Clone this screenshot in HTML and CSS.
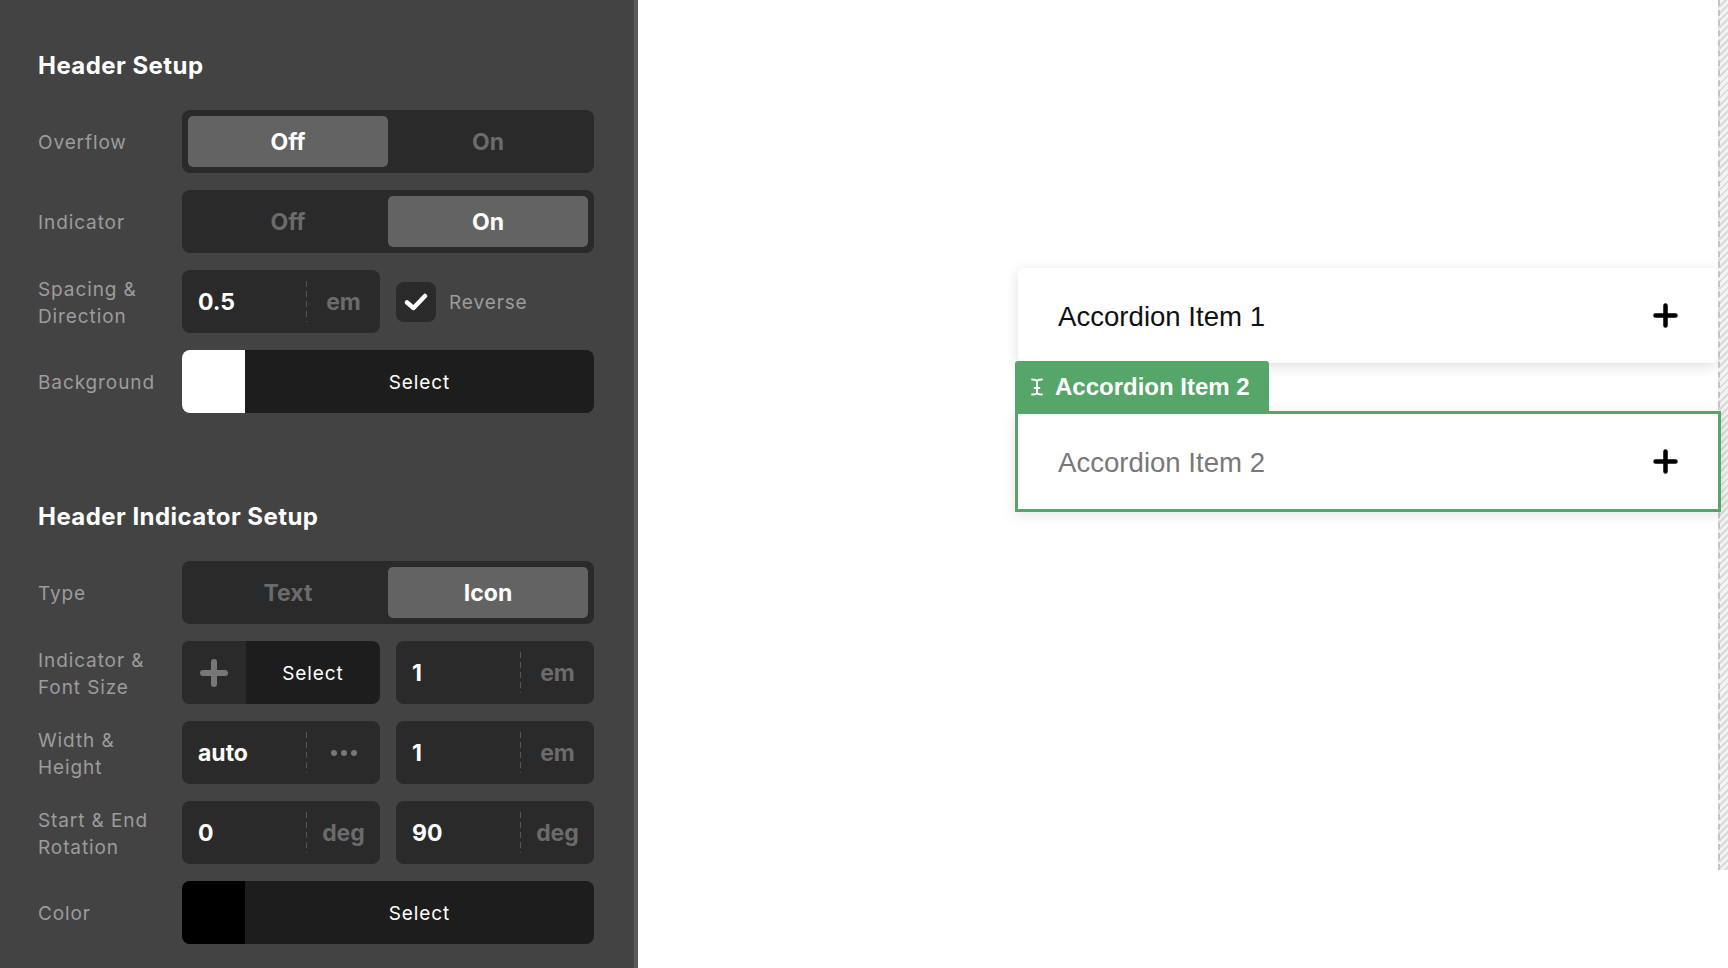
FILE: index.html
```html
<!DOCTYPE html>
<html lang="en">
<head>
    <meta charset="UTF-8">
    <title>Accordion</title>
    <link rel="stylesheet" href="styles.css">
</head>
<body>
<div class="app">
    <aside class="panel">
        <h2 class="panel-title">Header Setup</h2>
        <div class="fields">
            <div class="field">
                <div class="field-label">Overflow</div>
                <div class="segmented">
                    <span class="seg active">Off</span>
                    <span class="seg">On</span>
                </div>
            </div>
            <div class="field">
                <div class="field-label">Indicator</div>
                <div class="segmented">
                    <span class="seg">Off</span>
                    <span class="seg active">On</span>
                </div>
            </div>
            <div class="field">
                <div class="field-label">Spacing &amp;<br>Direction</div>
                <div class="check-row">
                    <div class="num-input">
                        <span class="num-value">0.5</span>
                        <span class="num-divider"></span>
                        <span class="num-unit">em</span>
                    </div>
                    <span class="checkbox">
                        <svg width="24" height="18" viewBox="0 0 24 18"><path d="M3 9.5 L9.5 15 L21 3" stroke="#fff" stroke-width="4.5" fill="none" stroke-linecap="round" stroke-linejoin="round"/></svg>
                    </span>
                    <span class="check-label">Reverse</span>
                </div>
            </div>
            <div class="field">
                <div class="field-label">Background</div>
                <div class="select-bar">
                    <span class="swatch swatch-white"></span>
                    <span class="select-text">Select</span>
                </div>
            </div>
        </div>

        <h2 class="panel-title second">Header Indicator Setup</h2>
        <div class="fields">
            <div class="field">
                <div class="field-label">Type</div>
                <div class="segmented">
                    <span class="seg">Text</span>
                    <span class="seg active">Icon</span>
                </div>
            </div>
            <div class="field">
                <div class="field-label">Indicator &amp;<br>Font Size</div>
                <div class="pair">
                    <div class="select-bar">
                        <span class="icon-slot">
                            <svg width="28" height="28" viewBox="0 0 28 28"><path d="M14 3v22M3 14h22" stroke="#777" stroke-width="6" stroke-linecap="round"/></svg>
                        </span>
                        <span class="select-text">Select</span>
                    </div>
                    <div class="num-input">
                        <span class="num-value">1</span>
                        <span class="num-divider"></span>
                        <span class="num-unit">em</span>
                    </div>
                </div>
            </div>
            <div class="field">
                <div class="field-label">Width &amp;<br>Height</div>
                <div class="pair">
                    <div class="num-input">
                        <span class="num-value">auto</span>
                        <span class="num-divider"></span>
                        <span class="num-unit"><i class="dot"></i><i class="dot"></i><i class="dot"></i></span>
                    </div>
                    <div class="num-input">
                        <span class="num-value">1</span>
                        <span class="num-divider"></span>
                        <span class="num-unit">em</span>
                    </div>
                </div>
            </div>
            <div class="field">
                <div class="field-label">Start &amp; End<br>Rotation</div>
                <div class="pair">
                    <div class="num-input">
                        <span class="num-value">0</span>
                        <span class="num-divider"></span>
                        <span class="num-unit">deg</span>
                    </div>
                    <div class="num-input">
                        <span class="num-value">90</span>
                        <span class="num-divider"></span>
                        <span class="num-unit">deg</span>
                    </div>
                </div>
            </div>
            <div class="field">
                <div class="field-label">Color</div>
                <div class="select-bar">
                    <span class="swatch swatch-black"></span>
                    <span class="select-text">Select</span>
                </div>
            </div>
        </div>
    </aside>

    <main class="canvas">
        <div class="stage">
            <div class="accordion">
                <div class="acc-item">
                    <span class="acc-title">Accordion Item 1</span>
                    <svg class="acc-plus" width="25" height="25" viewBox="0 0 25 25"><path d="M12.5 2.5v20M2.5 12.5h20" stroke="#000" stroke-width="4.5" stroke-linecap="round"/></svg>
                </div>
                <div class="acc-selected">
                    <div class="acc-tab">
                        <svg width="12" height="18" viewBox="0 0 12 18"><path d="M1 1.5C3.5 1.5 6 1.5 6 3.5C6 1.5 8.5 1.5 11 1.5M6 3.5V14.5M3.5 10H8.5M1 16.5C3.5 16.5 6 16.5 6 14.5C6 16.5 8.5 16.5 11 16.5" stroke="#fff" stroke-width="1.8" fill="none" stroke-linecap="round"/></svg>
                        <span>Accordion Item 2</span>
                    </div>
                    <div class="acc-item muted">
                        <span class="acc-title">Accordion Item 2</span>
                        <svg class="acc-plus" width="25" height="25" viewBox="0 0 25 25"><path d="M12.5 2.5v20M2.5 12.5h20" stroke="#000" stroke-width="4.5" stroke-linecap="round"/></svg>
                    </div>
                </div>
            </div>
        </div>
        <div class="edge-strip"></div>
    </main>
</div>
</body>
</html>
```

FILE: styles.css
```css
*{
    box-sizing: border-box;
}
body{
    margin: 0;
    background: #fff;
}
.app{
    display: flex;
    height: 968px;
    overflow: hidden;
}

/* settings panel */
.panel{
    flex: none;
    width: 638px;
    padding: 51px 40px 0 38px;
    background: #434343;
    border-right: 4px solid #5a5a5a;
    font-family: "Inter", "Noto Sans", sans-serif;
}
.panel-title{
    margin: 0 0 29px;
    font-size: 24px;
    line-height: 30px;
    font-weight: 700;
    color: #fff;
    letter-spacing: 0.45px;
}
.panel-title.second{
    margin-top: 89px;
}
.fields{
    display: flex;
    flex-direction: column;
    gap: 17px;
}
.field{
    display: grid;
    grid-template-columns: 144px 412px;
    align-items: center;
    height: 63px;
}
.field-label{
    padding-top: 2px;
    font-size: 19px;
    line-height: 27px;
    color: #9c9c9c;
    letter-spacing: 0.9px;
}

/* on / off switch */
.segmented{
    display: grid;
    grid-template-columns: 1fr 1fr;
    height: 63px;
    padding: 6px;
    background: #2a2a2a;
    border-radius: 8px;
}
.seg{
    display: flex;
    align-items: center;
    justify-content: center;
    padding-top: 1px;
    border-radius: 5px;
    font-size: 23px;
    font-weight: 700;
    color: #6b6b6b;
}
.seg.active{
    background: #636363;
    color: #fff;
}

/* number inputs */
.pair{
    display: grid;
    grid-template-columns: 1fr 1fr;
    gap: 16px;
}
.num-input{
    display: flex;
    align-items: center;
    height: 63px;
    background: #2a2a2a;
    border-radius: 8px;
}
.num-value{
    flex: 1;
    padding-left: 16px;
    font-size: 23px;
    font-weight: 700;
    color: #fff;
}
.num-divider{
    width: 1px;
    height: 41px;
    background: repeating-linear-gradient(to bottom, #565656 0 6px, transparent 6px 10px);
}
.num-unit{
    display: flex;
    align-items: center;
    justify-content: center;
    gap: 4px;
    width: 73px;
    font-size: 23px;
    font-weight: 700;
    color: #6b6b6b;
}
.dot{
    width: 6px;
    height: 6px;
    border-radius: 50%;
    background: #777;
}

.check-row{
    display: flex;
    align-items: center;
}
.check-row .num-input{
    width: 198px;
}
.checkbox{
    display: flex;
    align-items: center;
    justify-content: center;
    width: 40px;
    height: 40px;
    margin-left: 16px;
    background: #2a2a2a;
    border-radius: 8px;
}
.check-label{
    margin-left: 13px;
    padding-top: 2px;
    font-size: 19px;
    color: #9c9c9c;
    letter-spacing: 0.9px;
}

/* colour / icon pickers */
.select-bar{
    display: flex;
    height: 63px;
    background: #1d1d1d;
    border-radius: 8px;
    overflow: hidden;
}
.swatch{
    flex: none;
    width: 63px;
}
.swatch-white{
    background: #fff;
}
.swatch-black{
    background: #000;
}
.icon-slot{
    flex: none;
    display: flex;
    align-items: center;
    justify-content: center;
    width: 64px;
    background: #2a2a2a;
}
.select-text{
    flex: 1;
    display: flex;
    align-items: center;
    justify-content: center;
    padding-top: 2px;
    font-size: 19px;
    color: #fff;
    letter-spacing: 0.9px;
}

/* preview canvas */
.canvas{
    flex: 1;
    display: flex;
    align-items: flex-start;
}
.stage{
    flex: 1;
    display: flex;
    justify-content: flex-end;
    padding-top: 268px;
}
.accordion{
    display: flex;
    flex-direction: column;
    width: 700px;
    font-family: "Liberation Sans", Arial, sans-serif;
}
.acc-item{
    display: flex;
    align-items: center;
    justify-content: space-between;
    height: 95px;
    padding: 0 40px 0 40px;
    background: #fff;
    border-radius: 6px;
    box-shadow: 0 3px 14px rgba(0, 0, 0, 0.13);
    font-size: 27.6px;
    color: #111;
}
.acc-title{
    padding-top: 2px;
}
.acc-item.muted{
    color: #787878;
    box-shadow: none;
}
.acc-selected{
    position: relative;
    margin: 48px -3px 0;
    border: 3px solid #55a668;
    box-shadow: 0 3px 14px rgba(0, 0, 0, 0.1);
}
.acc-tab{
    position: absolute;
    left: -3px;
    bottom: calc(100% + 3px);
    display: flex;
    align-items: center;
    gap: 12px;
    height: 50px;
    padding: 2px 19px 0 16px;
    background: #55a668;
    border-radius: 3px 3px 0 0;
    font-size: 24px;
    font-weight: 700;
    color: #fff;
}
.edge-strip{
    flex: none;
    width: 10px;
    height: 870px;
    border-left: 2px dashed #c4c4c4;
    background: repeating-linear-gradient(135deg, #f3f3f3 0 3px, #dadada 3px 5px);
}
```
